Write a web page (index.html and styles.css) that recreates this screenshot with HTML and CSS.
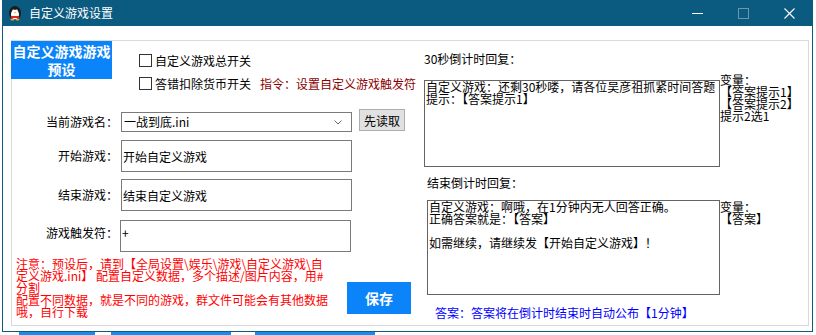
FILE: index.html
```html
<!DOCTYPE html>
<html>
<head>
  <title>自定义游戏设置</title>
  <link rel="stylesheet" href="styles.css">
</head>
<body>
  <div class="window">
    <div class="titlebar">
      <svg class="app-icon" width="16" height="16" viewBox="0 0 16 16">
        <ellipse cx="8" cy="8" rx="6" ry="7" fill="#1b1b1b"/>
        <ellipse cx="8" cy="9.5" rx="4" ry="4.8" fill="#fff"/>
        <circle cx="6.3" cy="5.5" r="1" fill="#fff"/>
        <circle cx="9.7" cy="5.5" r="1" fill="#fff"/>
        <path d="M6.6 7.2 L9.4 7.2 L8 8.6 Z" fill="#f5a623"/>
        <rect x="4" y="11" width="8" height="2" fill="#d23"/>
        <ellipse cx="5.5" cy="14.6" rx="2" ry="1" fill="#f5a623"/>
        <ellipse cx="10.5" cy="14.6" rx="2" ry="1" fill="#f5a623"/>
      </svg>
      <span class="title">自定义游戏设置</span>
      <div class="controls">
        <span class="ctl">
          <svg width="11" height="11" viewBox="0 0 11 11"><path d="M0 5.5 H11" stroke="#fff" stroke-width="1"/></svg>
        </span>
        <span class="ctl">
          <svg width="11" height="11" viewBox="0 0 11 11"><rect x="0.5" y="0.5" width="10" height="10" fill="none" stroke="#6f95ad"/></svg>
        </span>
        <span class="ctl">
          <svg width="11" height="11" viewBox="0 0 11 11"><path d="M0.5 0.5 L10.5 10.5 M10.5 0.5 L0.5 10.5" stroke="#fff" stroke-width="1.1"/></svg>
        </span>
      </div>
    </div>

    <div class="client">
      <div class="group">
        <!-- левая часть -->
        <div class="left">
          <div class="top">
            <div class="badge">自定义游戏游戏<br>预设</div>
            <div class="checks">
              <label class="check"><span class="box"></span>自定义游戏总开关</label>
              <label class="check"><span class="box"></span>答错扣除货币开关<span class="cmd">指令：设置自定义游戏触发符</span></label>
            </div>
          </div>

          <div class="field first">
            <span class="lbl">当前游戏名：</span>
            <div class="combo">
              <span>一战到底.ini</span>
              <svg width="8" height="5" viewBox="0 0 8 5"><path d="M0.5 0.5 L4 4 L7.5 0.5" fill="none" stroke="#666"/></svg>
            </div>
            <button class="read">先读取</button>
          </div>
          <div class="field second">
            <span class="lbl">开始游戏：</span>
            <input class="text" type="text" value="开始自定义游戏">
          </div>
          <div class="field third">
            <span class="lbl">结束游戏：</span>
            <input class="text" type="text" value="结束自定义游戏">
          </div>
          <div class="field fourth">
            <span class="lbl">游戏触发符：</span>
            <textarea class="text trigger">+</textarea>
          </div>

          <div class="bottom">
            <p class="note">注意：预设后，请到【全局设置\娱乐\游戏\自定义游戏\自<br>定义游戏.ini】 配置自定义数据，多个描述/图片内容，用#<br>分割<br>配置不同数据，就是不同的游戏，群文件可能会有其他数据<br>哦，自行下载</p>
            <button class="save">保存</button>
          </div>
        </div>

        <!-- правая часть -->
        <div class="right">
          <div class="r-label">30秒倒计时回复：</div>
          <div class="r-row one">
            <textarea class="reply first-reply">自定义游戏：还剩30秒喽，请各位吴彦祖抓紧时间答题
提示：【答案提示1】</textarea>
            <div class="vars up">变量：<br>【答案提示1】<br>【答案提示2】<br>提示2选1</div>
          </div>
          <div class="r-label second-label">结束倒计时回复：</div>
          <div class="r-row two">
            <textarea class="reply end-reply">自定义游戏：啊哦，在1分钟内无人回答正确。
正确答案就是：【答案】

如需继续，请继续发【开始自定义游戏】！</textarea>
            <div class="vars down">变量：<br>【答案】</div>
          </div>
          <div class="answer">答案：答案将在倒计时结束时自动公布【1分钟】</div>
        </div>
      </div>
    </div>
  </div>
  <div class="taskbar">
    <span class="t1"></span>
    <span class="t2"></span>
    <span class="t3"></span>
  </div>
</body>
</html>
```

FILE: styles.css
```css
/* Базовые стили */
body {
  margin: 0;
  padding: 0;
  background: #fff;
  font-family: "Noto Sans CJK SC", "Liberation Sans", sans-serif;
  font-size: 12px;
  color: #000;
  overflow: hidden;
}
.window {
  width: 811px;
  height: 332px;
  margin-left: 2px;
  border: 1px solid #0b5a80;
  border-top: 0;
  box-sizing: border-box;
  background: #fff;
  display: flex;
  flex-direction: column;
}
.titlebar {
  height: 26px;
  background: #0b5a80;
  display: flex;
  align-items: center;
  color: #fff;
}
.app-icon {
  margin-left: 4px;
}
.title {
  margin-left: 6px;
  font-size: 12px;
  line-height: 12px;
}
.controls {
  margin-left: auto;
  display: flex;
  height: 26px;
}
.ctl {
  width: 46px;
  display: flex;
  align-items: center;
  justify-content: center;
}
.client {
  padding: 14px 0 0 8px;
}
.group {
  width: 798px;
  height: 286px;
  border: 1px solid #dadada;
  box-sizing: border-box;
  display: flex;
}
.left {
  width: 412px;
  flex-shrink: 0;
}
.top {
  display: flex;
  height: 49px;
}
.badge {
  width: 101px;
  height: 38px;
  margin-left: -1px;
  padding-top: 1px;
  box-sizing: border-box;
  background: #0a84f8;
  color: #fff;
  font-size: 14px;
  font-weight: bold;
  line-height: 18px;
  text-align: center;
}
.checks {
  margin-left: 27px;
  padding-top: 13px;
  display: flex;
  flex-direction: column;
  gap: 10px;
}
.check {
  display: flex;
  align-items: center;
  height: 13px;
  line-height: 13px;
  white-space: nowrap;
}
.box {
  width: 13px;
  height: 13px;
  border: 1px solid #333;
  box-sizing: border-box;
  margin-right: 3px;
  background: #fff;
}
.cmd {
  margin-left: 9px;
  color: #8b0000;
}
.field {
  display: flex;
  align-items: center;
}
.lbl {
  width: 106px;
  margin-right: 3px;
  text-align: right;
  line-height: 12px;
  white-space: nowrap;
}
.field.first {
  margin-top: 19px;
  align-items: flex-start;
  height: 23px;
}
.field.first .lbl {
  margin-top: 7px;
}
.combo {
  width: 231px;
  height: 20px;
  margin-top: 3px;
  border: 1px solid #7a7a7a;
  box-sizing: border-box;
  display: flex;
  align-items: center;
  justify-content: space-between;
  padding: 0 9px 0 2px;
  line-height: 12px;
}
.read {
  width: 46px;
  height: 22px;
  margin-left: 7px;
  padding: 0;
  background: #e1e1e1;
  border: 1px solid #adadad;
  font-family: inherit;
  font-size: 12px;
  color: #000;
}
.text {
  width: 231px;
  height: 32px;
  border: 1px solid #7a7a7a;
  box-sizing: border-box;
  padding: 0 0 0 1px;
  margin: 0;
  font-family: inherit;
  font-size: 12px;
  color: #000;
  outline: none;
}
.field.second {
  margin-top: 8px;
}
.field.third {
  margin-top: 7px;
}
.field.fourth {
  margin-top: 9px;
  align-items: flex-start;
}
.field.fourth .lbl {
  margin-top: 7px;
  margin-right: 2px;
}
.trigger {
  padding: 6px 1px 0;
  line-height: 12px;
  resize: none;
  overflow: hidden;
}
.bottom {
  display: flex;
  margin-top: 6px;
}
.note {
  width: 331px;
  margin: 0 0 0 4px;
  color: #ff0000;
  line-height: 12px;
  white-space: nowrap;
}
.save {
  width: 64px;
  height: 32px;
  margin-top: 24px;
  padding: 0;
  border: none;
  background: #0a84f8;
  color: #fff;
  font-family: inherit;
  font-size: 14px;
  font-weight: bold;
}
.right {
  padding-top: 12px;
}
.r-label {
  line-height: 12px;
  white-space: nowrap;
}
.r-row {
  display: flex;
  align-items: flex-start;
}
.r-row.one {
  margin-top: 15px;
}
.reply {
  box-sizing: border-box;
  border: 1px solid #646464;
  padding: 0 1px;
  margin: 0;
  font-family: inherit;
  font-size: 12px;
  line-height: 12px;
  color: #000;
  resize: none;
  overflow: hidden;
  outline: none;
}
.first-reply {
  width: 296px;
  height: 87px;
}
.second-label {
  margin-top: 10px;
  margin-left: 3px;
}
.r-row.two {
  margin-top: 11px;
  margin-left: 3px;
}
.end-reply {
  width: 293px;
  height: 95px;
}
.vars {
  line-height: 12px;
  white-space: nowrap;
}
.vars.up {
  margin-top: -6px;
}
.vars.down {
  margin-top: 1px;
}
.answer {
  margin-top: 12px;
  margin-left: 11px;
  color: #0000ff;
  line-height: 12px;
  white-space: nowrap;
}
/* полоска под окном */
.taskbar {
  display: flex;
  height: 3px;
}
.taskbar span {
  background: #1a8cf0;
}
.t1 {
  width: 76px;
  margin-left: 19px;
}
.t2 {
  width: 120px;
  margin-left: 16px;
}
.t3 {
  width: 120px;
  margin-left: 24px;
}
```
